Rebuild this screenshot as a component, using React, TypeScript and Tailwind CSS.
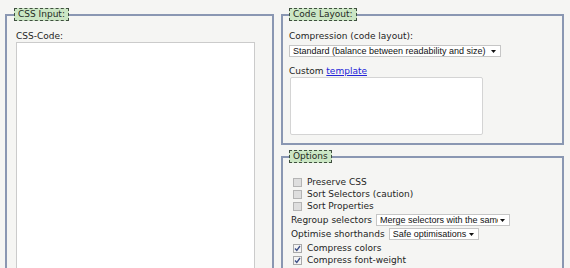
import React from 'react';

const Legend = ({ children, className = '' }: { children: React.ReactNode; className?: string }) => (
  <legend
    className={`h-[13px] px-[3px] leading-[11px] bg-[#cbe6c4] border border-dashed border-[#3f4f3f] text-[#1f2a1f] ${className}`}
  >
    {children}
  </legend>
);

const Arrow = () => (
  <svg width="5" height="3" viewBox="0 0 5 3" className="shrink-0">
    <path d="M0 0 H5 L2.5 3 Z" fill="#111" />
  </svg>
);

function FakeSelect({ value, width, textWidth }: { value: string; width: string; textWidth?: string }) {
  return (
    <div
      className={`${width} h-[12px] flex items-center justify-between bg-white border border-[#c6c6c6] pl-[3px] pr-[4px] font-['Liberation_Sans',Arial,sans-serif] text-[9px] leading-[10px] text-[#111]`}
    >
      <span className={`${textWidth ?? ''} overflow-hidden whitespace-nowrap`}>{value}</span>
      <Arrow />
    </div>
  );
}

function Check({ label, checked }: { label: string; checked?: boolean }) {
  return (
    <div className="h-[12px] flex items-center">
      <span
        className={`ml-[4px] mr-[5px] w-[9px] h-[9px] border flex items-center justify-center ${
          checked ? 'bg-[#f4f4f4] border-[#a9a9a9]' : 'bg-[#dedede] border-[#b4b4b4]'
        }`}
      >
        {checked && (
          <svg width="7" height="7" viewBox="0 0 7 7">
            <path d="M1 3.5 L2.8 5.5 L6 1" stroke="#3d4f86" strokeWidth="1.3" fill="none" />
          </svg>
        )}
      </span>
      <span>{label}</span>
    </div>
  );
}

export default function App() {
  return (
    <div className="w-[570px] h-[268px] overflow-hidden bg-[#f5f5f3] flex items-start gap-[7px] pl-[5px] pt-[8px] font-['DejaVu_Sans',Verdana,sans-serif] text-[9px] text-[#1e1e1e]">
      {/* CSS input */}
      <fieldset className="w-[269px] h-[400px] shrink-0 border-2 border-[#8a97b2] px-[9px]">
        <Legend className="ml-[-2px]">CSS Input:</Legend>
        <div className="pt-[9px] h-[21px] leading-[12px]">CSS-Code:</div>
        <div className="w-[239px] h-[340px] bg-white border border-[#cbcbcb]" />
      </fieldset>

      <div className="w-[283px] shrink-0 flex flex-col">
        {/* Code layout */}
        <fieldset className="h-[137px] shrink-0 border-2 border-[#8a97b2] px-[6px]">
          <Legend>Code Layout:</Legend>
          <div className="pt-[9px] h-[21px] leading-[12px]">Compression (code layout):</div>
          <div className="mt-[3px]">
            <FakeSelect value="Standard (balance between readability and size)" width="w-[212px]" />
          </div>
          <div className="mt-[8px] h-[12px] leading-[12px]">
            Custom <span className="text-[#2323d8] underline">template</span>
          </div>
          <div className="ml-[1px] w-[193px] h-[58px] bg-white border border-[#d4d4d4] rounded-[2px]" />
        </fieldset>

        {/* Options */}
        <fieldset className="mt-[5px] h-[200px] shrink-0 border-2 border-[#8a97b2] px-[6px]">
          <Legend>Options</Legend>
          <div className="pt-[13px] leading-[12px]">
            <Check label="Preserve CSS" />
            <Check label="Sort Selectors (caution)" />
            <Check label="Sort Properties" />
            <div className="mt-[1px] h-[14px] flex items-center pl-[2px] gap-[4px]">
              <span>Regroup selectors</span>
              <FakeSelect value="Merge selectors with the same" width="w-[134px]" textWidth="w-[118px]" />
            </div>
            <div className="h-[14px] flex items-center pl-[2px] gap-[4px]">
              <span>Optimise shorthands</span>
              <FakeSelect value="Safe optimisations" width="w-[90px]" textWidth="w-[76px]" />
            </div>
            <div className="mt-[1px]">
              <Check label="Compress colors" checked />
              <Check label="Compress font-weight" checked />
            </div>
          </div>
        </fieldset>
      </div>
    </div>
  );
}
